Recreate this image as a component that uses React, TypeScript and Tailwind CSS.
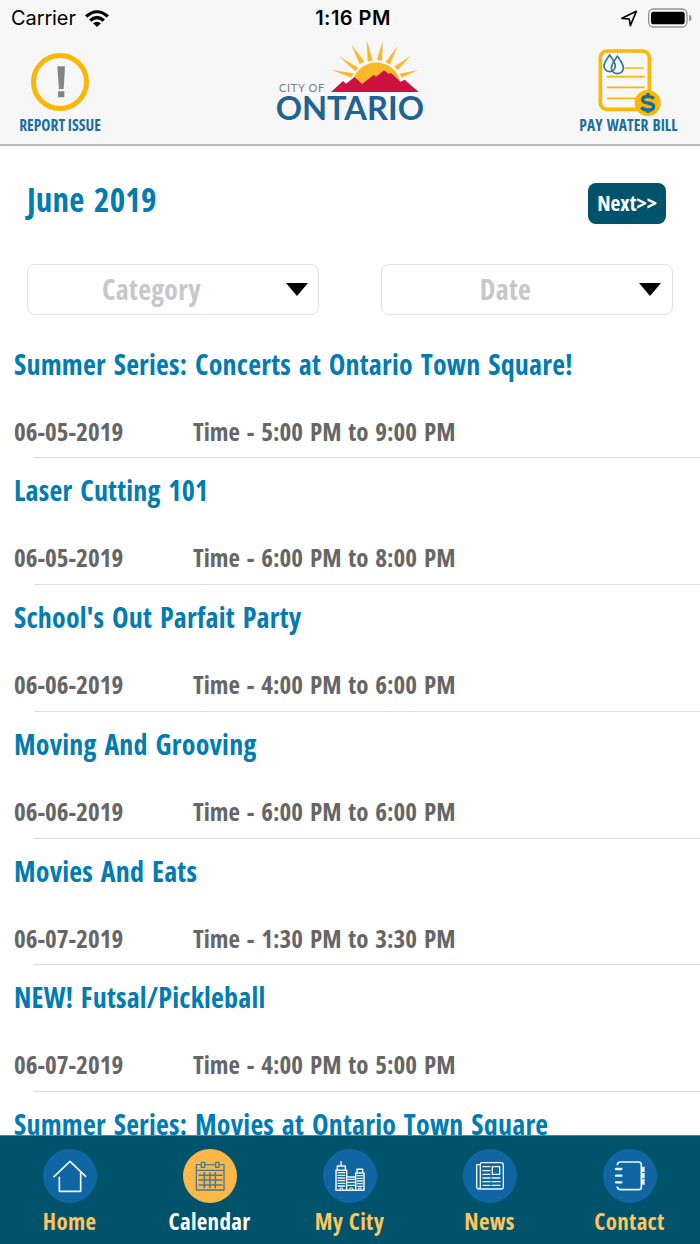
import React from 'react';

interface CityEvent {
  title: string;
  date: string;
  time: string;
}

const EVENTS: CityEvent[] = [
  { title: 'Summer Series: Concerts at Ontario Town Square!', date: '06-05-2019', time: '5:00 PM to 9:00 PM' },
  { title: 'Laser Cutting 101', date: '06-05-2019', time: '6:00 PM to 8:00 PM' },
  { title: "School's Out Parfait Party", date: '06-06-2019', time: '4:00 PM to 6:00 PM' },
  { title: 'Moving And Grooving', date: '06-06-2019', time: '6:00 PM to 6:00 PM' },
  { title: 'Movies And Eats', date: '06-07-2019', time: '1:30 PM to 3:30 PM' },
  { title: 'NEW! Futsal/Pickleball', date: '06-07-2019', time: '4:00 PM to 5:00 PM' },
  { title: 'Summer Series: Movies at Ontario Town Square', date: '', time: '' },
];

const StatusBar = () => (
  <div className="grid h-9 grid-cols-3 items-center pl-[11px] pr-2 font-['Inter',sans-serif] text-[20px] leading-9 text-black">
    <div className="flex items-center gap-[9px]">
      <span className="tracking-[-0.1px]">Carrier</span>
      <svg className="h-[17px] w-6" viewBox="0 0 72 51">
        <path d="M0 16Q36 -15 72 16L65 23Q36 -3 7 23Z" />
        <path d="M12 28Q36 7 60 28L53 35Q36 20 19 35Z" />
        <path d="M24 40Q36 30 48 40L36 51Z" />
      </svg>
    </div>
    <span className="pl-[3px] text-center font-semibold tracking-[0.45px]">1:16 PM</span>
    <div className="flex items-center justify-end">
      <svg className="h-[17px] w-[17px]" viewBox="0 0 51 51">
        <path d="M3 25L46 4L28 47L25 27Z" fill="none" stroke="black" strokeWidth="5" strokeLinejoin="round" />
      </svg>
      <svg className="ml-[10px] h-5 w-[44px]" viewBox="0 0 132 60">
        <rect x="2" y="3" width="115" height="54" rx="14" fill="none" stroke="#929292" strokeWidth="4" />
        <rect x="9" y="11" width="101" height="38" rx="8" />
        <path d="M123 20Q131 23 131 30T123 40Z" fill="#929292" />
      </svg>
    </div>
  </div>
);

const OntarioLogo = () => (
  <svg className="h-[84px] w-[150px] overflow-visible" viewBox="45 117 450 252">
    <g fill="#fbb829">
      <path d="M216 210L281 220L274 233Z" />
      <path d="M236 168L295 203L286 214Z" />
      <path d="M274 134L313 184L299 193Z" />
      <path d="M320 119L338 182L323 184Z" />
      <path d="M368 122L366 182L351 180Z" />
      <path d="M413 138L390 193L377 186Z" />
      <path d="M452 168L413 210L402 200Z" />
      <path d="M474 210L425 233L419 221Z" />
      <path d="M279 240A73 73 0 0 1 420 243L372 250L306 256Z" />
    </g>
    <path
      d="M213 276L249 243L258 251L284 231L306 252L342 224L348 230L372 211L386 221L393 219L422 245L434 239L476 276Z"
      fill="#cf1141"
    />
    <text x="57" y="275" textLength="136" fontSize="33" fill="#75808f" fontFamily="Lato, sans-serif">
      CITY OF
    </text>
    <text x="47" y="360" textLength="445" fontSize="98" fontWeight="700" fill="#1f6293" fontFamily="Lato, sans-serif" lengthAdjust="spacingAndGlyphs">
      ONTARIO
    </text>
  </svg>
);

const ReportIcon = () => (
  <svg className="h-[60px] w-[60px]" viewBox="0 0 180 180">
    <circle cx="90" cy="90" r="79.5" fill="none" stroke="#fbb606" strokeWidth="15" />
    <path d="M82 43H105L101 111H87Z M84 118H103V136H84Z" fill="#848484" />
  </svg>
);

const BillIcon = () => (
  <svg className="h-[67px] w-[63px]" viewBox="116 149 189 201">
    <g fill="none" stroke="#fbb606">
      <rect x="123" y="155" width="147" height="175" rx="20" strokeWidth="11" />
      <path d="M195 206H253M143 232H256M143 264H256M143 297H235" strokeWidth="5" />
    </g>
    <circle cx="265" cy="311" r="39" fill="#fbb606" />
    <g fill="#f7f7f7" stroke="#2a77a8" strokeWidth="5">
      <path d="M151 167Q134 190 134 200A17 17 0 0 0 168 200Q168 190 151 167Z" />
      <path d="M174 171Q156 195 156 206A18 17 0 0 0 192 206Q192 195 174 171Z" fill="none" />
    </g>
    <path
      d="M284 298Q277 291 266 291Q250 291 250 301Q250 309 266 311Q283 314 283 322Q283 332 266 332Q253 332 246 324M266 281V292M266 331V340"
      fill="none"
      stroke="#146b9e"
      strokeWidth="10"
    />
  </svg>
);

interface SelectProps {
  label: string;
  spacing: string;
}

const Select: React.FC<SelectProps> = ({ label, spacing }) => (
  <div className={`flex h-[51px] w-[292px] items-center rounded-lg border border-[#e2e2e4] bg-white ${spacing}`}>
    <span className="flex-1 pb-px text-center text-[28px] leading-none tracking-[0.25px] text-[#c7c7cc]">{label}</span>
    <svg className="h-[13px] w-[22px]" viewBox="0 0 22 13">
      <path d="M0 0H22L11 13Z" />
    </svg>
  </div>
);

const EventRow: React.FC<{ event: CityEvent }> = ({ event }) => (
  <li className="flex h-[126.75px] shrink-0 flex-col pl-[14px]">
    <h2 className="mt-[13px] h-[38px] shrink-0 text-[28px] leading-[38px] tracking-[0.2px] whitespace-nowrap text-[#007cb2] [word-spacing:2.6px]">
      {event.title}
    </h2>
    {event.date && (
      <>
        <div className="mt-[31px] flex flex-1 text-[25px] leading-[34px] text-[#666]">
          <span className="w-[179px]">{event.date}</span>
          <span className="[word-spacing:2.4px]">Time - {event.time}</span>
        </div>
        <div className="ml-5 h-px shrink-0 bg-[#dedee0]" />
      </>
    )}
  </li>
);

const HomeIcon = () => (
  <path d="M33 83L81 37L128 82M49 85V127H113V70" strokeWidth="5" />
);

const CalendarIcon = () => (
  <>
    <path d="M55 47H40V123H123V47H109M68 47H95M40 64H123" strokeWidth="4" />
    <path d="M55 40H65V55H55ZM98 40H108V55H98Z" strokeWidth="4" />
    <path d="M48 79H117M48 93H117M48 108H117M64 71V116M81 71V116M97 71V116" strokeWidth="4.5" />
  </>
);

const CityIcon = () => (
  <>
    <path d="M39 124V64H71V124ZM43 63V51H67V63M54 50V38M98 124V72H123V124ZM102 71V61H119V71M71 84H98M39 124H123" strokeWidth="4.5" />
    <path d="M45 71H65M45 79H65M45 87H65M45 95H65M45 103H65M45 111H65M75 91H95M75 100H95M75 109H95M103 80H118M103 88H118M103 96H118M103 104H118M103 112H118" strokeWidth="4" />
    <path d="M51 124V117H59V124M80 124V117H89V124M107 124V117H114V124" strokeWidth="3" />
  </>
);

const NewsIcon = () => (
  <>
    <path d="M52 46Q52 41 57 41H114Q121 41 121 48V113Q121 120 114 120H48Q41 120 41 113V47H52V112Q52 120 47 120" strokeWidth="4" />
    <path d="M88 53H110V76H88Z" strokeWidth="4" />
    <path d="M60 53H81M60 65H81M60 76H81M60 87H81M60 98H81M60 109H81M87 87H111M87 98H111M87 109H111" strokeWidth="4" />
  </>
);

const ContactIcon = () => (
  <>
    <path d="M43 47Q45 39 52 39H107Q115 39 115 47V115Q115 122 107 122H52Q45 122 43 114" strokeWidth="5" />
    <path d="M39 60H55M39 80H55M39 100H55" strokeWidth="7" />
    <path d="M121 53V69M121 72V88M121 91V107" strokeWidth="8" strokeLinecap="butt" />
  </>
);

const TABS = [
  { name: 'Home', icon: <HomeIcon /> },
  { name: 'Calendar', icon: <CalendarIcon />, active: true },
  { name: 'My City', icon: <CityIcon /> },
  { name: 'News', icon: <NewsIcon /> },
  { name: 'Contact', icon: <ContactIcon /> },
];

const TabBar = () => (
  <nav className="grid h-[109px] shrink-0 grid-cols-5 border-t border-[#4d8594] bg-[#00536b]">
    {TABS.map((tab) => (
      <div key={tab.name} className="flex flex-col items-center pt-[13px]">
        <svg className="h-[54px] w-[54px] shrink-0" viewBox="0 0 162 162">
          <circle cx="81" cy="81" r="81" fill={tab.active ? '#fbb748' : '#0f66a3'} />
          <g fill="none" stroke={tab.active ? '#477c90' : '#eef6fb'} strokeLinejoin="round" strokeLinecap="round">
            {tab.icon}
          </g>
        </svg>
        <span
          className={`mt-[2px] -ml-px text-[23px] leading-8 tracking-[0.3px] whitespace-nowrap [word-spacing:1px] ${
            tab.active ? 'text-white' : 'text-[#fdc55c]'
          }`}
        >
          {tab.name}
        </span>
      </div>
    ))}
  </nav>
);

export default function App() {
  return (
    <div className="flex h-[1244px] w-[700px] flex-col overflow-hidden bg-white font-['Open_Sans',sans-serif] font-bold [font-stretch:75%]">
      <header className="h-[146px] shrink-0 border-b-2 border-[#b9b9b9] bg-[#f7f7f7] font-normal">
        <StatusBar />
        <div className="grid grid-cols-[120px_1fr_143px] items-start">
          <div className="flex flex-col items-center pt-4">
            <ReportIcon />
            <span className="mt-[3px] text-[15.5px] leading-5 font-bold whitespace-nowrap text-[#1b6da5]">
              REPORT ISSUE
            </span>
          </div>
          <div className="flex pt-[3px] pl-[155px]">
            <OntarioLogo />
          </div>
          <div className="flex flex-col items-center pt-[13px]">
            <div className="pl-px">
              <BillIcon />
            </div>
            <span className="-mt-px text-[15.5px] leading-5 font-bold tracking-[0.1px] whitespace-nowrap text-[#1b6da5] [word-spacing:1px]">
              PAY WATER BILL
            </span>
          </div>
        </div>
      </header>

      <main className="flex min-h-0 flex-1 flex-col overflow-hidden">
        <div className="mt-9 flex h-[42px] shrink-0 items-center justify-between pr-[34px] pl-[27px]">
          <h1 className="pb-[7px] text-[33px] leading-none tracking-[0.15px] text-[#007cb2] [word-spacing:3.5px]">June 2019</h1>
          <button className="h-[41px] w-[78px] rounded-lg bg-[#00536b] text-[21.5px] leading-none text-white">Next&gt;&gt;</button>
        </div>
        <div className="mt-10 flex shrink-0 justify-between px-[27px]">
          <Select label="Category" spacing="pr-[10px] -indent-[11px]" />
          <Select label="Date" spacing="pr-[11px] -indent-[10px]" />
        </div>
        <ul className="mt-[16.5px] flex flex-col">
          {EVENTS.map((event) => (
            <EventRow key={event.title} event={event} />
          ))}
        </ul>
      </main>

      <TabBar />
    </div>
  );
}
